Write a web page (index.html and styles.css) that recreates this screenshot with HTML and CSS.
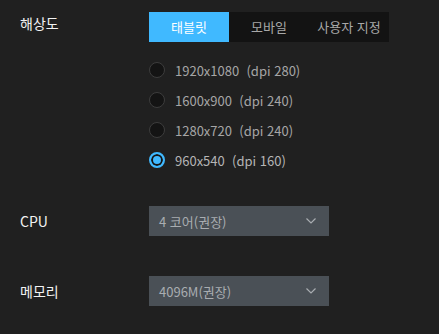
FILE: index.html
```html
<!DOCTYPE html>
<html lang="ko">
<head>
<meta charset="utf-8">
<link rel="stylesheet" href="styles.css">
</head>
<body>
<div class="page">
  <div class="row res">
    <div class="label">해상도</div>
    <div class="field">
      <div class="tabs">
        <div class="tab active">태블릿</div>
        <div class="tab">모바일</div>
        <div class="tab">사용자 지정</div>
      </div>
      <div class="radios">
        <div class="radio"><span class="dot"></span><span class="rtext">1920x1080&nbsp;&nbsp;(dpi 280)</span></div>
        <div class="radio"><span class="dot"></span><span class="rtext">1600x900&nbsp;&nbsp;(dpi 240)</span></div>
        <div class="radio"><span class="dot"></span><span class="rtext">1280x720&nbsp;&nbsp;(dpi 240)</span></div>
        <div class="radio checked"><span class="dot"></span><span class="rtext">960x540&nbsp;&nbsp;(dpi 160)</span></div>
      </div>
    </div>
  </div>
  <div class="row cpu">
    <div class="label">CPU</div>
    <div class="field">
      <div class="select"><span>4 코어(권장)</span>
        <svg class="chev" width="10" height="6" viewBox="0 0 10 6"><path d="M0.5 0.5 L5 5 L9.5 0.5" fill="none" stroke="#a9adb1" stroke-width="1.2"/></svg>
      </div>
    </div>
  </div>
  <div class="row mem">
    <div class="label">메모리</div>
    <div class="field">
      <div class="select"><span>4096M(권장)</span>
        <svg class="chev" width="10" height="6" viewBox="0 0 10 6"><path d="M0.5 0.5 L5 5 L9.5 0.5" fill="none" stroke="#a9adb1" stroke-width="1.2"/></svg>
      </div>
    </div>
  </div>
</div>
</body>
</html>
```
FILE: styles.css
```css
html, body {
  margin: 0;
  padding: 0;
  background: #202020;
  width: 439px;
  height: 334px;
  overflow: hidden;
}
.page {
  padding-top: 12px;
  font-family: "Noto Sans CJK KR", "Noto Sans", sans-serif;
}
.row {
  display: flex;
}
.label {
  width: 129px;
  padding-left: 20px;
  color: #f2f2f2;
  font-size: 14px;
  height: 30px;
  line-height: 22px;
}
.field {
  display: flex;
  flex-direction: column;
}
.tabs {
  display: flex;
  width: 240px;
  height: 30px;
  background: #131313;
}
.tab {
  width: 80px;
  text-align: center;
  line-height: 30px;
  font-size: 13px;
  color: #a8a8a8;
}
.tab.active {
  background: #40b9ff;
  color: #ffffff;
}
.radios {
  margin-top: 13px;
  display: flex;
  flex-direction: column;
}
.radio {
  height: 30px;
  display: flex;
  align-items: center;
}
.dot {
  box-sizing: border-box;
  width: 16px;
  height: 16px;
  border-radius: 50%;
  background: #141414;
  border: 1px solid #3d3d3d;
  margin-right: 10px;
}
.radio.checked .dot {
  border: 2px solid #40b9ff;
  background: #40b9ff;
  box-shadow: inset 0 0 0 2px #141414;
}
.rtext {
  font-size: 13px;
  color: #a6a6a6;
}
.radio.checked .rtext {
  color: #b5b5b5;
}
.cpu {
  margin-top: 31px;
}
.cpu .label, .mem .label {
  line-height: 30px;
}
.mem {
  margin-top: 40px;
}
.select {
  box-sizing: border-box;
  width: 180px;
  height: 30px;
  background: #4a5056;
  display: flex;
  align-items: center;
  justify-content: space-between;
  padding: 0 10px 0 10px;
  font-size: 13px;
  color: #a9adb1;
}
.chev {
  margin-right: 3px;
}
```
